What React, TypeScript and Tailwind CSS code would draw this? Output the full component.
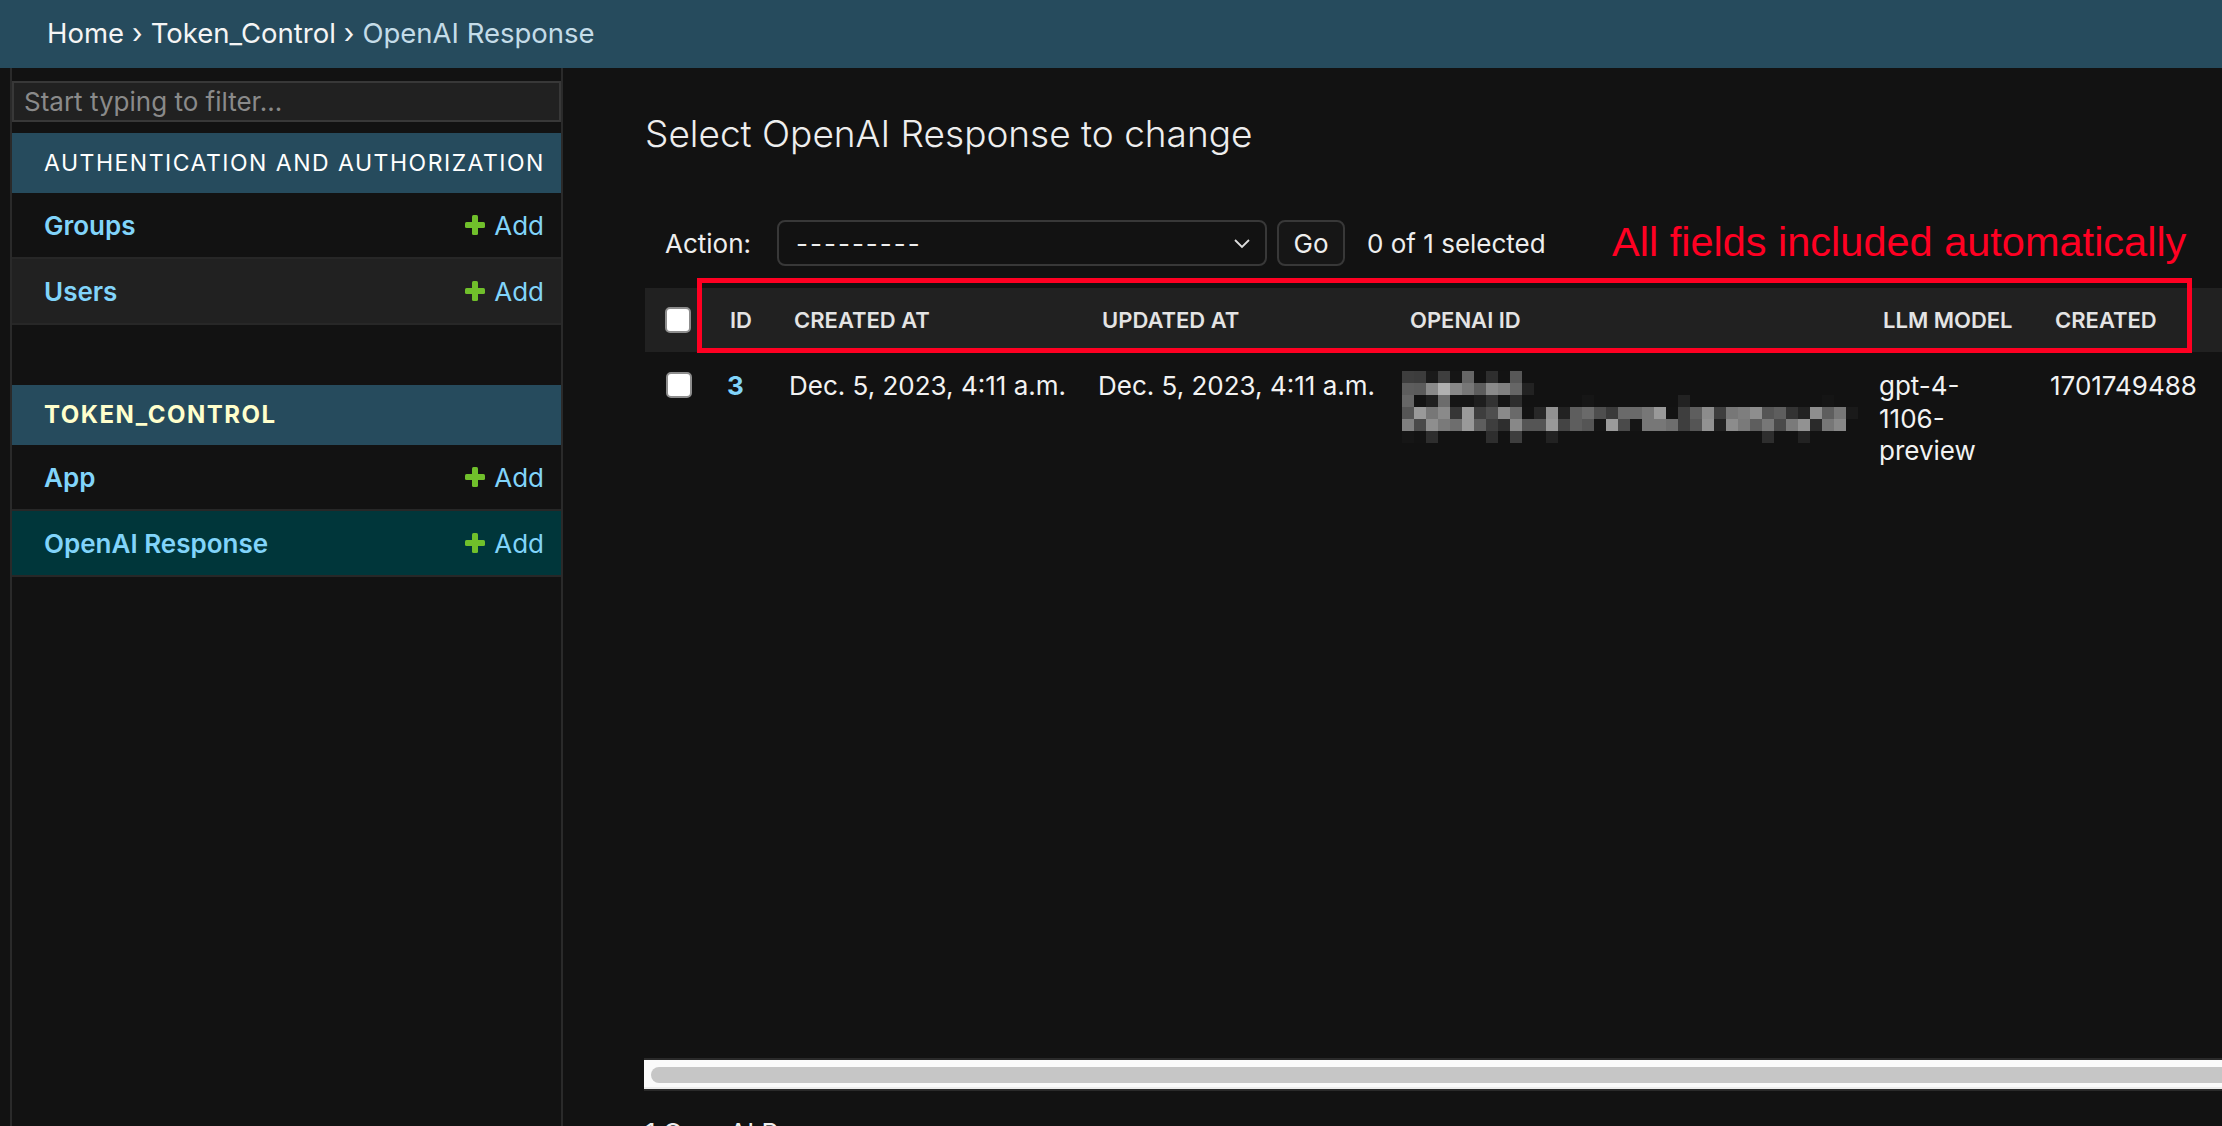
import React from "react";

// pixelated (redacted) openai id, 12px blocks, grey levels
const BLUR: string[][] = [
  ["3e", "3c", "1a", "3e", "15", "66", "13", "2e", "13", "57"],
  ["5d", "5b", "8a", "b0", "88", "77", "5d", "8a", "80", "66", "22"],
  ["66", "13", "20", "6c", "15", "15", "1e", "33", "14", "2e", "", "", "", "", "", "16", "", "", "", "", "", "", "", "22", "", "", "", "", "", "", "", "", "", "", "", "15"],
  ["55", "99", "77", "8a", "36", "9a", "3e", "4e", "8a", "6a", "13", "28", "92", "22", "5e", "6a", "4e", "3a", "6a", "6a", "77", "99", "13", "3e", "5e", "8c", "3e", "77", "7e", "8e", "55", "5e", "33", "22", "8e", "5e", "77", "1a"],
  ["80", "4a", "8e", "7a", "6e", "99", "5e", "3e", "2e", "88", "55", "55", "99", "44", "5e", "55", "15", "9a", "4a", "15", "77", "77", "6e", "3e", "55", "92", "22", "8c", "7a", "5e", "77", "4a", "7a", "92", "2a", "77", "88"],
  ["16", "13", "2e", "", "", "", "", "2e", "", "3e", "", "", "22", "", "", "", "", "", "", "", "", "", "", "", "", "", "", "", "", "", "2e", "", "", "22"],
];

function PlusIcon() {
  return (
    <svg width="20" height="20" viewBox="0 0 20 20" className="shrink-0">
      <rect x="7" y="0" width="6" height="20" rx="1.5" fill="#70bf2b" />
      <rect x="0" y="7" width="20" height="6" rx="1.5" fill="#70bf2b" />
    </svg>
  );
}

function Checkbox() {
  return <span className="block h-[26px] w-[26px] rounded-[5px] border-2 border-[#8d8d8d] bg-white" />;
}

function ModelRow({ name, striped, selected }: { name: string; striped?: boolean; selected?: boolean }) {
  return (
    <div
      className={`flex h-[66px] items-center justify-between border-b-2 border-[#272727] pl-[32px] pr-[17px] ${
        selected ? "bg-[#00363a]" : striped ? "bg-[#212121]" : "bg-[#121212]"
      }`}
    >
      <span className="text-[26px] font-semibold text-[#81d4fa]">{name}</span>
      <span className="flex items-center gap-[9px] text-[26px] text-[#81d4fa]">
        <PlusIcon />
        Add
      </span>
    </div>
  );
}

export default function App() {
  return (
    <div className="relative flex h-[1126px] w-full flex-col overflow-hidden bg-[#121212] font-[Inter,sans-serif] text-[#eeeeee]">
      {/* Breadcrumbs */}
      <header className="flex h-[68px] shrink-0 items-center bg-[#264b5d] pl-[47px] text-[27.5px]">
        <span className="text-[#f5f5f5]">Home</span>
        <span className="mx-[8px] text-[#f5f5f5]">›</span>
        <span className="text-[#f5f5f5]">Token_Control</span>
        <span className="mx-[8px] text-[#f5f5f5]">›</span>
        <span className="text-[#c4dce8]">OpenAI Response</span>
      </header>

      <div className="flex min-h-0 flex-1">
        {/* sidebar toggle */}
        <div className="w-[12px] shrink-0 border-r-2 border-[#2a2a2a]" />

        {/* Nav sidebar */}
        <nav className="w-[551px] shrink-0 border-r-2 border-[#2a2a2a] pt-[13px]">
          <div className="flex h-[41px] items-center border-2 border-[#383838] bg-[#212121] px-[10px] text-[26px] text-[#8a8a8a]">
            Start typing to filter...
          </div>

          <div className="mt-[11px]">
            <div className="flex h-[60px] items-center whitespace-nowrap bg-[#264b5d] pl-[32px] text-[23px] tracking-[1.5px] text-white">
              AUTHENTICATION AND AUTHORIZATION
            </div>
            <ModelRow name="Groups" />
            <ModelRow name="Users" striped />
          </div>

          <div className="mt-[60px]">
            <div className="flex h-[60px] items-center bg-[#264b5d] pl-[32px] text-[24px] font-bold tracking-[1.5px] text-[#ffffcc]">
              TOKEN_CONTROL
            </div>
            <ModelRow name="App" />
            <ModelRow name="OpenAI Response" selected />
          </div>
        </nav>

        {/* Content */}
        <main className="min-w-0 flex-1 overflow-hidden pl-[82px]">
          <div className="flex h-[132px] items-center">
            <h1 className="text-[37px] font-light text-[#eeeeee]">Select OpenAI Response to change</h1>
          </div>

          <div className="mt-[20px] flex h-[46px] items-center text-[26px]">
            <span className="ml-[20px] mr-[26px]">Action:</span>
            <div className="flex h-[46px] w-[490px] items-center justify-between rounded-[8px] border-2 border-[#383838] bg-[#121212] pl-[17px] pr-[14px]">
              <span className="tracking-[2px]">---------</span>
              <svg width="18" height="12" viewBox="0 0 18 12">
                <polyline points="2,3 9,10 16,3" fill="none" stroke="#dddddd" strokeWidth="1.8" />
              </svg>
            </div>
            <div className="ml-[10px] flex h-[46px] w-[68px] items-center justify-center rounded-[8px] border-2 border-[#383838] bg-[#161616]">
              Go
            </div>
            <span className="ml-[22px]">0 of 1 selected</span>
          </div>

          {/* Results */}
          <div className="mt-[22px] h-[770px] w-[1700px]">
            <div className="grid h-[64px] grid-cols-[69px_64px_308px_308px_473px_172px_306px] items-center bg-[#212121] text-[22px] font-semibold text-[#e4e4e4]">
              <div className="pl-[20px]">
                <Checkbox />
              </div>
              <div className="pl-[16px]">ID</div>
              <div className="pl-[16px]">CREATED AT</div>
              <div className="pl-[16px]">UPDATED AT</div>
              <div className="pl-[16px]">OPENAI ID</div>
              <div className="pl-[16px]">LLM MODEL</div>
              <div className="pl-[16px]">CREATED</div>
            </div>
            <div className="grid grid-cols-[69px_64px_308px_308px_473px_172px_306px] items-start pb-[16px] pt-[18px] text-[26px] leading-[32.5px] text-[#f2f2f2]">
              <div className="pl-[21px] pt-[2px]">
                <Checkbox />
              </div>
              <div className="pl-[13px] font-bold text-[#81d4fa]">3</div>
              <div className="pl-[11px]">Dec. 5, 2023, 4:11 a.m.</div>
              <div className="pl-[12px]">Dec. 5, 2023, 4:11 a.m.</div>
              <div className="pl-[8px] pt-[1px]">
                <svg width="456" height="72" viewBox="0 0 456 72">
                  {BLUR.map((row, y) =>
                    row.map((v, x) =>
                      v ? <rect key={`${x}-${y}`} x={x * 12} y={y * 12} width="12" height="12" fill={`#${v}${v}${v}`} /> : null
                    )
                  )}
                </svg>
              </div>
              <div className="pl-[12px]">
                gpt-4-
                <br />
                1106-
                <br />
                preview
              </div>
              <div className="pl-[11px]">1701749488</div>
            </div>
          </div>

          {/* horizontal scrollbar */}
          <div className="-ml-[1px] border-y-2 border-[#2a2a2a]">
            <div className="h-[29px] border-b-2 border-[#ececec] bg-[#fafafa] py-[7px] pl-[7px]">
              <div className="h-[16px] rounded-l-full bg-[#c6c6c6]" />
            </div>
          </div>

          <p className="mt-[22px] text-[26px] text-[#eeeeee]">1 OpenAI Response</p>
        </main>
      </div>

      {/* annotation overlay */}
      <div className="pointer-events-none absolute left-[697px] top-[278px] h-[75px] w-[1495px] border-[5px] border-[#ff0022]" />
      <div className="pointer-events-none absolute left-[1612px] top-[214px] font-['Liberation_Sans_Narrow',sans-serif] text-[41.5px] leading-[56px] text-[#ff0022]">
        All fields included automatically
      </div>
    </div>
  );
}
